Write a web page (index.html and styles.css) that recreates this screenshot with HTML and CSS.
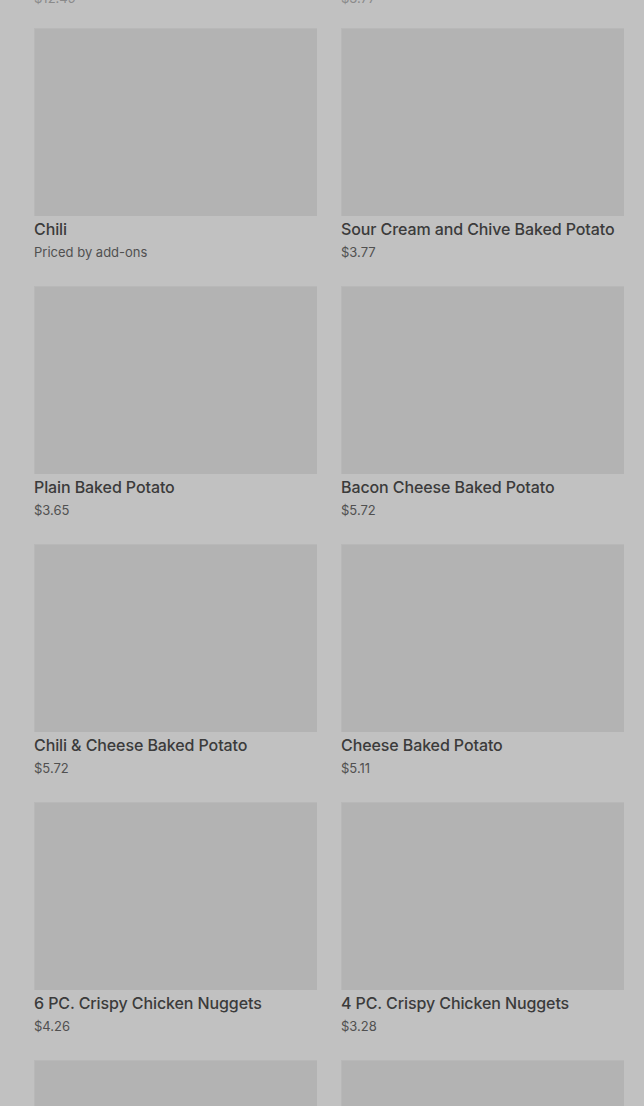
FILE: index.html
```html
<!DOCTYPE html>
<html lang="en">
<head>
<meta charset="utf-8">
<title>Menu</title>
<link rel="stylesheet" href="styles.css">
</head>
<body>
<main class="menu">
  <div class="grid">
    <article class="card card--cut"><div class="thumb"></div><h3 class="title">Baked Potato</h3><p class="price">$12.49</p></article>
    <article class="card card--cut"><div class="thumb"></div><h3 class="title">Baked Potato</h3><p class="price">$3.77</p></article>

    <article class="card"><div class="thumb"></div><h3 class="title">Chili</h3><p class="price">Priced by add-ons</p></article>
    <article class="card"><div class="thumb"></div><h3 class="title">Sour Cream and Chive Baked Potato</h3><p class="price">$3.77</p></article>

    <article class="card"><div class="thumb"></div><h3 class="title">Plain Baked Potato</h3><p class="price">$3.65</p></article>
    <article class="card"><div class="thumb"></div><h3 class="title">Bacon Cheese Baked Potato</h3><p class="price">$5.72</p></article>

    <article class="card"><div class="thumb"></div><h3 class="title">Chili &amp; Cheese Baked Potato</h3><p class="price">$5.72</p></article>
    <article class="card"><div class="thumb"></div><h3 class="title">Cheese Baked Potato</h3><p class="price">$5.11</p></article>

    <article class="card"><div class="thumb"></div><h3 class="title">6 PC. Crispy Chicken Nuggets</h3><p class="price">$4.26</p></article>
    <article class="card"><div class="thumb"></div><h3 class="title">4 PC. Crispy Chicken Nuggets</h3><p class="price">$3.28</p></article>

    <article class="card"><div class="thumb"></div><h3 class="title">10 PC. Crispy Chicken Nuggets</h3><p class="price">$6.29</p></article>
    <article class="card"><div class="thumb"></div><h3 class="title">Spicy Chicken Nuggets</h3><p class="price">$4.26</p></article>
  </div>
</main>
</body>
</html>
```

FILE: styles.css
```css
html, body {
  margin: 0;
  padding: 0;
  background: #c1c1c1;
  overflow: hidden;
}

body {
  font-family: Inter, "Noto Sans", "Liberation Sans", sans-serif;
  color: #3b3b3b;
}

.menu {
  height: 1106px;
  overflow: hidden;
}

.grid {
  display: grid;
  grid-template-columns: 283px 283px;
  column-gap: 24px;
  row-gap: 24px;
  padding: 0 20px 0 34px;
  margin-top: -230px;
}

.card {
  display: flex;
  flex-direction: column;
  margin: 0;
}

.thumb {
  height: 188px;
  background: #b3b3b3;
  box-shadow: inset 1px 1px 0 #b8b8b8;
}

.title {
  margin: 1px 0 0;
  font-size: 16px;
  line-height: 24px;
  font-weight: 500;
  letter-spacing: -0.1px;
  color: #3b3b3b;
  white-space: nowrap;
}

.price {
  margin: 1px 0 0;
  font-size: 13px;
  line-height: 20px;
  font-weight: 400;
  color: #505050;
}

.card--cut .price {
  margin-top: 9px;
  line-height: 12px;
  color: #8a8a8a;
}
```
